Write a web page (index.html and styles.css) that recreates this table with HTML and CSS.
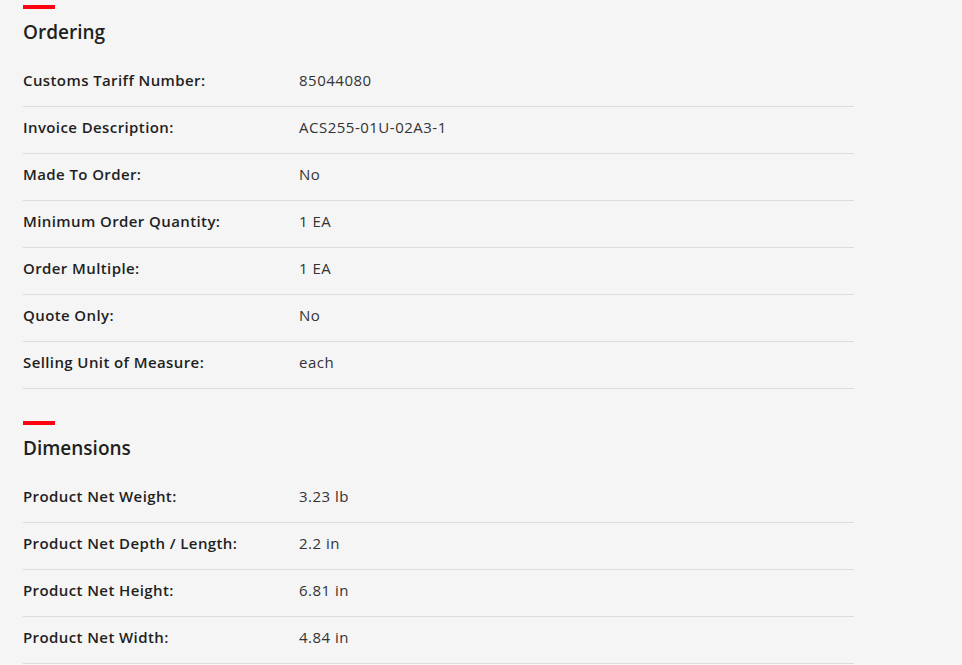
FILE: index.html
```html
<!DOCTYPE html>
<html>
<head>
<meta charset="utf-8">
<link rel="stylesheet" href="styles.css">
</head>
<body>
<div class="page">
  <section class="section">
    <div class="bar"></div>
    <h2 class="title">Ordering</h2>
    <div class="rows">
      <div class="row"><div class="label">Customs Tariff Number:</div><div class="value">85044080</div></div>
      <div class="row"><div class="label">Invoice Description:</div><div class="value">ACS255-01U-02A3-1</div></div>
      <div class="row"><div class="label">Made To Order:</div><div class="value">No</div></div>
      <div class="row"><div class="label">Minimum Order Quantity:</div><div class="value">1 EA</div></div>
      <div class="row"><div class="label">Order Multiple:</div><div class="value">1 EA</div></div>
      <div class="row"><div class="label">Quote Only:</div><div class="value">No</div></div>
      <div class="row"><div class="label">Selling Unit of Measure:</div><div class="value">each</div></div>
    </div>
  </section>
  <section class="section">
    <div class="bar"></div>
    <h2 class="title">Dimensions</h2>
    <div class="rows">
      <div class="row"><div class="label">Product Net Weight:</div><div class="value">3.23 lb</div></div>
      <div class="row"><div class="label">Product Net Depth / Length:</div><div class="value">2.2 in</div></div>
      <div class="row"><div class="label">Product Net Height:</div><div class="value">6.81 in</div></div>
      <div class="row"><div class="label">Product Net Width:</div><div class="value">4.84 in</div></div>
    </div>
  </section>
</div>
</body>
</html>
```

FILE: styles.css
```css
html, body {
  margin: 0;
  padding: 0;
  background: #f5f5f5;
}
body {
  font-family: "Open Sans", "Liberation Sans", sans-serif;
  color: #1f1f1f;
  overflow: hidden;
}
.page {
  padding: 5px 0 0 23px;
  width: 831px;
}
.section {
  margin-bottom: 32px;
}
.bar {
  width: 32px;
  height: 4px;
  background: #ff000f;
}
.title {
  margin: 0;
  padding-top: 12px;
  height: 51px;
  box-sizing: border-box;
  font-size: 19px;
  line-height: 22px;
  font-weight: 600;
  color: #1f1f1f;
}
.row {
  display: flex;
  box-sizing: border-box;
  height: 47px;
  padding-bottom: 6px;
  align-items: center;
  border-bottom: 1px solid #dcdcdc;
}
.label {
  width: 276px;
  font-size: 15px;
  letter-spacing: 0.4px;
  font-weight: 600;
  color: #1f1f1f;
}
.value {
  font-size: 15px;
  letter-spacing: 0.5px;
  color: #333;
}
```
